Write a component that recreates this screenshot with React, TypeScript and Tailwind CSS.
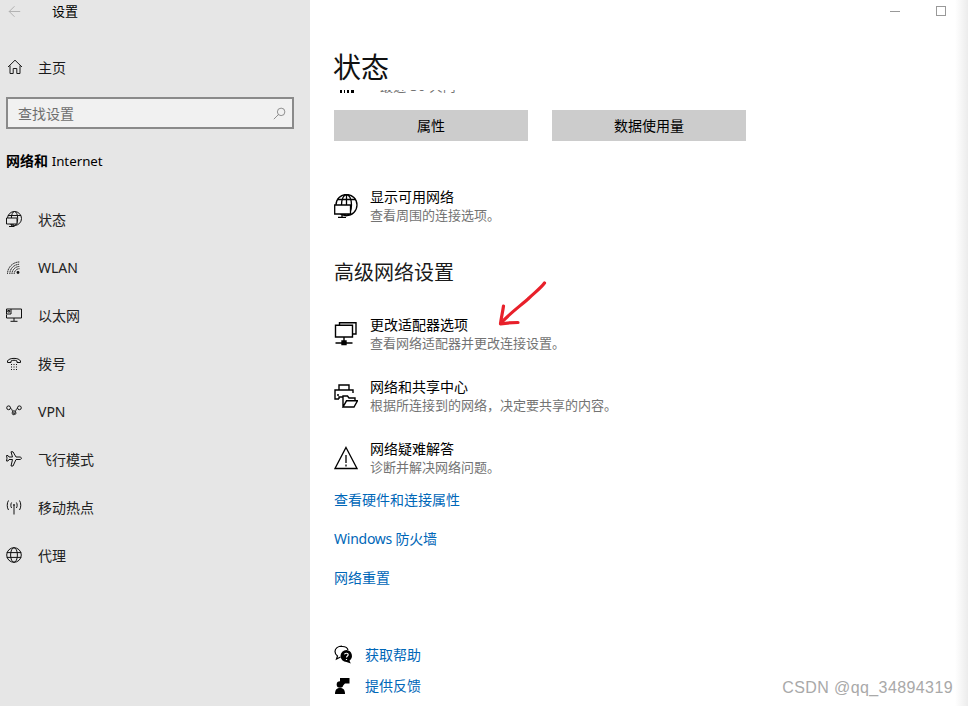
import React from 'react'

const FONT = 'font-["Noto_Sans","Noto_Sans_CJK_SC",sans-serif]'

type IconProps = {className?: string}

function Svg({className, children}: IconProps & {children: React.ReactNode}) {
  return (
    <svg viewBox="0 0 16 16" fill="none" stroke="currentColor" strokeWidth="1" className={className}>
      {children}
    </svg>
  )
}

const HomeIcon = ({className}: IconProps) => (
  <Svg className={className}>
    <path d="M1 8 8 1.2 15 8M3 6.500V14.500H6.200V9.500H9.800V14.500H13V6.500" />
  </Svg>
)
const StatusIcon = ({className}: IconProps) => (
  <Svg className={className}>
    <circle cx="8.500" cy="7.500" r="7" />
    <ellipse cx="8.500" cy="7.500" rx="3.200" ry="7" />
    <path d="M2 4.500H15" />
    <path d="M.5 7H11V13H.5ZM5.700 13V15.300M3 15.500H8.500" fill="#e6e6e6" />
  </Svg>
)
const WifiIcon = ({className}: IconProps) => (
  <Svg className={className}>
    <path d="M1.500 15A12 12 0 0 1 13.500 3M3.800 15A9.700 9.700 0 0 1 13.500 5.300M6 15A7.500 7.500 0 0 1 13.500 7.500M8.200 15A5.300 5.300 0 0 1 13.500 9.700" strokeDasharray="1.400 .5" />
    <circle cx="12" cy="13.500" r="1.400" fill="currentColor" stroke="none" />
  </Svg>
)
const EthernetIcon = ({className}: IconProps) => (
  <Svg className={className}>
    <path d="M5 2H15.500V11H.5V7.500M8 11V14M4.500 14.300H11.500" />
    <path d="M.5 2H5V7H.5ZM1.800 3.500H3.700V5H1.800Z" />
  </Svg>
)
const DialIcon = ({className}: IconProps) => (
  <Svg className={className}>
    <path d="M1.500 7.500V6C3 2.500 13 2.500 14.500 6V7.500H11V6C9.500 5 6.500 5 5 6V7.500Z" />
    <path d="M5 9.500H6M7.500 9.500H8.500M10 9.500H11M5 12H6M7.500 12H8.500M10 12H11M5 14.500H6M7.500 14.500H8.500M10 14.500H11" />
  </Svg>
)
const VpnIcon = ({className}: IconProps) => (
  <Svg className={className}>
    <circle cx="2.600" cy="4.800" r="1.900" />
    <circle cx="13.400" cy="4.800" r="1.900" />
    <path d="M4.500 5C6 5.500 7.500 11.500 8.700 11.500 10.500 11.500 10.200 8.500 8.200 7.800 6 7.300 5.500 12 7.500 11.700 8.800 11.500 10 5.500 11.500 5" />
  </Svg>
)
const PlaneIcon = ({className}: IconProps) => (
  <Svg className={className}>
    <path d="M5 .8H7L10 6H14C16 6.500 16 8 14 8.500H10L7 15H5L6.500 8.500H3L2 10H.5L1 7.200.5 4.500H2L3 6H6.500Z" />
  </Svg>
)
const HotspotIcon = ({className}: IconProps) => (
  <Svg className={className}>
    <path d="M8 6.500V15.500M5.600 3.500C4.600 5 4.600 7.500 5.600 9M10.400 3.500C11.400 5 11.400 7.500 10.400 9M2.500 1.500C.8 4 .8 8.500 2.500 11M13.500 1.500C15.200 4 15.200 8.500 13.500 11" />
    <circle cx="8" cy="6" r=".9" fill="currentColor" stroke="none" />
  </Svg>
)
const GlobeIcon = ({className}: IconProps) => (
  <Svg className={className}>
    <circle cx="8" cy="8" r="7.300" />
    <ellipse cx="8" cy="8" rx="3.400" ry="7.300" />
    <path d="M.8 5.600H15.200M.8 10.400H15.200" />
  </Svg>
)
const StatusGlobe = ({className}: IconProps) => (
  <svg viewBox="0 0 24 24" fill="none" stroke="currentColor" strokeWidth="1.300" className={className}>
    <circle cx="12.500" cy="11" r="10.500" />
    <ellipse cx="12.500" cy="11" rx="5" ry="10.500" />
    <path d="M3 5.500H22M12.500 .5V11" />
    <path d="M.7 11H16.500V20H.7ZM8 20V23M4 23.300H12" fill="#fff" />
  </svg>
)
const AdapterIcon = ({className}: IconProps) => (
  <svg viewBox="0 0 24 24" fill="none" stroke="currentColor" strokeWidth="1.400" className={className}>
    <path d="M5.500 3V.8H22V12H18.500" />
    <path d="M1.500 3.200H18.500V15H1.500ZM10 15V19M1.500 21H8M12 21H18.500" />
    <path d="M8 19H12V22.500H8Z" fill="currentColor" />
  </svg>
)
const PrinterIcon = ({className}: IconProps) => (
  <svg viewBox="0 0 24 24" fill="none" stroke="currentColor" strokeWidth="1.400" className={className}>
    <path d="M5 6V1H15V6M5 15H1V6H19V9M5 11H3M5 15V13H9" />
    <path d="M9 23V12H13.500L15 14H21V17M9 23H20L23.500 16.800H12.500L9 23Z" fill="#fff" />
  </svg>
)
const WarningIcon = ({className}: IconProps) => (
  <svg viewBox="0 0 24 24" fill="none" stroke="currentColor" strokeWidth="1.300" className={className}>
    <path d="M12 1.500 23 22.500H1ZM12 9V17M12 18.500V20.500" />
  </svg>
)
const HelpIcon = ({className}: IconProps) => (
  <svg viewBox="0 0 20 20" className={className}>
    <path d="M8 1C4 1 1 3.500 1 6.500 1 8.500 2 10 3.500 11L2.500 14 6.500 12" fill="none" stroke="currentColor" strokeWidth="1.200" />
    <path d="M5 1.500H8.500C11.500 1.500 13.500 3 14 5" fill="none" stroke="currentColor" strokeWidth="1.200" />
    <path d="M12.500 5A6 6 0 0 1 15.500 15.800L16.800 18.500 12.500 17A6 6 0 1 1 12.500 5Z" fill="currentColor" />
    <path d="M10.500 9.300C10.800 7.800 14.200 7.800 14.200 9.800 14.200 11 12.500 11 12.500 12.600M12.500 14V15" fill="none" stroke="#fff" strokeWidth="1.200" />
  </svg>
)
const FeedbackIcon = ({className}: IconProps) => (
  <svg viewBox="0 0 20 20" fill="currentColor" className={className}>
    <circle cx="6" cy="8.500" r="3.300" />
    <path d="M1 18C1 13.500 3 12 6 12S11 13.500 11 18Z" />
    <path d="M6 2H15.500V7.500H11L8.500 10V7.500H6Z" />
  </svg>
)
const BackIcon = ({className}: IconProps) => (
  <Svg className={className}>
    <path d="M15 8H1.500M8 1.500 1.500 8 8 14.500" />
  </Svg>
)
const SearchIcon = ({className}: IconProps) => (
  <Svg className={className}>
    <circle cx="10" cy="6" r="4.600" />
    <path d="M6.700 9.300 1 15" />
  </Svg>
)

const NAV = [
  {label: '状态', Icon: StatusIcon},
  {label: 'WLAN', Icon: WifiIcon},
  {label: '以太网', Icon: EthernetIcon},
  {label: '拨号', Icon: DialIcon},
  {label: 'VPN', Icon: VpnIcon},
  {label: '飞行模式', Icon: PlaneIcon},
  {label: '移动热点', Icon: HotspotIcon},
  {label: '代理', Icon: GlobeIcon},
]

function Sidebar() {
  return (
    <aside className="w-[310px] shrink-0 bg-[#e6e6e6] text-[#1a1a1a]">
      <div className="flex h-[22px] items-center pl-[8px]">
        <BackIcon className="h-[13px] w-[13px] text-[#a6a6a6]" />
        <span className="ml-[31px] text-[13px] leading-none text-black">设置</span>
      </div>
      <div className="mt-[21px] flex h-[48px] items-center pl-[7px]">
        <HomeIcon className="h-[16px] w-[16px]" />
        <span className="ml-[15px] text-[14px]">主页</span>
      </div>
      <div className="mx-[6px] mt-[6px] flex h-[32px] w-[288px] items-center justify-between border-2 border-[#8a8a8a] bg-[#f1f1f1] pl-[10px] pr-[6px]">
        <span className="text-[14px] text-[#6e6e6e]">查找设置</span>
        <SearchIcon className="h-[13px] w-[13px] text-[#777]" />
      </div>
      <h2 className="mt-[24px] pl-[6px] text-[14px] leading-[16px] text-black">
        <span className="font-semibold">网络和</span> <span className="text-[13.3px]">Internet</span>
      </h2>
      <nav className="mt-[26px]">
        {NAV.map(({label, Icon}) => (
          <div key={label} className="flex h-[48px] items-center pl-[6px]">
            <Icon className="h-[16px] w-[16px] text-[#111]" />
            <span className="ml-[16px] text-[14px] text-[#222]">{label}</span>
          </div>
        ))}
      </nav>
    </aside>
  )
}

function SettingRow({Icon, title, desc, className}: {Icon: React.FC<IconProps>; title: string; desc: string; className: string}) {
  return (
    <div className={`flex items-center ${className}`}>
      <Icon className="h-[24px] w-[24px] shrink-0 text-black" />
      <div className="ml-[12px]">
        <div className="text-[14px] leading-[18px] text-black">{title}</div>
        <div className="text-[13px] leading-[18px] text-[#737373]">{desc}</div>
      </div>
    </div>
  )
}

function Main() {
  return (
    <main className="relative flex-1 bg-white pl-[24px]">
      <div className="flex h-[90px] items-end pb-[3px]">
        <h1 className="-ml-[1px] text-[28px] leading-[40px] text-[#111]">状态</h1>
      </div>
      {/* row scrolled away under the title: only its lower edge shows */}
      <div className="flex h-[5px] items-end overflow-hidden">
        <div className="flex items-center">
          <div className="flex h-[14px] w-[20px] items-end gap-[2px] pl-[6px]">
            <span className="h-[12px] w-[2px] bg-black" />
            <span className="h-[12px] w-[2px] bg-black" />
            <span className="h-[12px] w-[2px] bg-black" />
            <span className="h-[8px] w-[4px] bg-black" />
          </div>
          <span className="ml-[26px] text-[13px] leading-[18px] tracking-[0.3px] text-[#737373]">最近 30 天内</span>
        </div>
      </div>
      <div className="mt-[15px] flex gap-[24px]">
        <div className="flex h-[31px] w-[194px] items-center justify-center bg-[#cccccc] text-[14px] text-black">属性</div>
        <div className="flex h-[31px] w-[194px] items-center justify-center bg-[#cccccc] text-[14px] text-black">数据使用量</div>
      </div>
      <SettingRow className="mt-[47px]" Icon={StatusGlobe} title="显示可用网络" desc="查看周围的连接选项。" />
      <h2 className="mt-[35px] text-[20px] leading-[28px] text-[#1a1a1a]">高级网络设置</h2>
      <SettingRow className="mt-[29px]" Icon={AdapterIcon} title="更改适配器选项" desc="查看网络适配器并更改连接设置。" />
      <SettingRow className="mt-[26px]" Icon={PrinterIcon} title="网络和共享中心" desc="根据所连接到的网络，决定要共享的内容。" />
      <SettingRow className="mt-[26px]" Icon={WarningIcon} title="网络疑难解答" desc="诊断并解决网络问题。" />
      <div className="mt-[14px] text-[14px] leading-[20px] text-[#0067b8]">查看硬件和连接属性</div>
      <div className="mt-[19px] text-[14px] leading-[20px] tracking-[-0.25px] text-[#0067b8]">Windows 防火墙</div>
      <div className="mt-[19px] text-[14px] leading-[20px] text-[#0067b8]">网络重置</div>
      <div className="mt-[57px] flex items-center">
        <HelpIcon className="h-[20px] w-[20px] text-black" />
        <span className="ml-[11px] text-[14px] leading-[20px] text-[#0067b8]">获取帮助</span>
      </div>
      <div className="mt-[11px] flex items-center">
        <FeedbackIcon className="h-[20px] w-[20px] text-black" />
        <span className="ml-[11px] text-[14px] leading-[20px] text-[#0067b8]">提供反馈</span>
      </div>

      {/* window controls */}
      <div className="absolute top-[11px] left-[580px] h-px w-[10px] bg-[#999]" />
      <div className="absolute top-[6px] left-[626px] h-[10px] w-[10px] border border-[#999]" />

      {/* hand-drawn arrow */}
      <svg className="absolute top-[275px] left-[180px] h-[60px] w-[65px]" viewBox="0 0 65 60" fill="none" stroke="#e8202a" strokeWidth="3.200" strokeLinecap="round" strokeLinejoin="round">
        <path d="M54.500 8C50 14 44 18 38 24 30 31 18 40 11 48" />
        <path d="M13.500 31C12.500 38 11 44 10.500 49 16 48 22 47.500 28 47.500" />
      </svg>

      {/* blurry edge and watermark from the capture */}
      <div className="absolute top-0 right-0 h-full w-[13px] bg-gradient-to-r from-white to-[#ececec]" />
      <div className="absolute right-[15px] bottom-[8px] text-[16px] leading-[20px] tracking-[0.4px] text-[#a9a9a9] font-['Liberation_Sans',sans-serif]">CSDN @qq_34894319</div>
    </main>
  )
}

export default function App() {
  return (
    <div className={`flex h-[706px] w-[968px] overflow-hidden ${FONT}`}>
      <Sidebar />
      <Main />
    </div>
  )
}
